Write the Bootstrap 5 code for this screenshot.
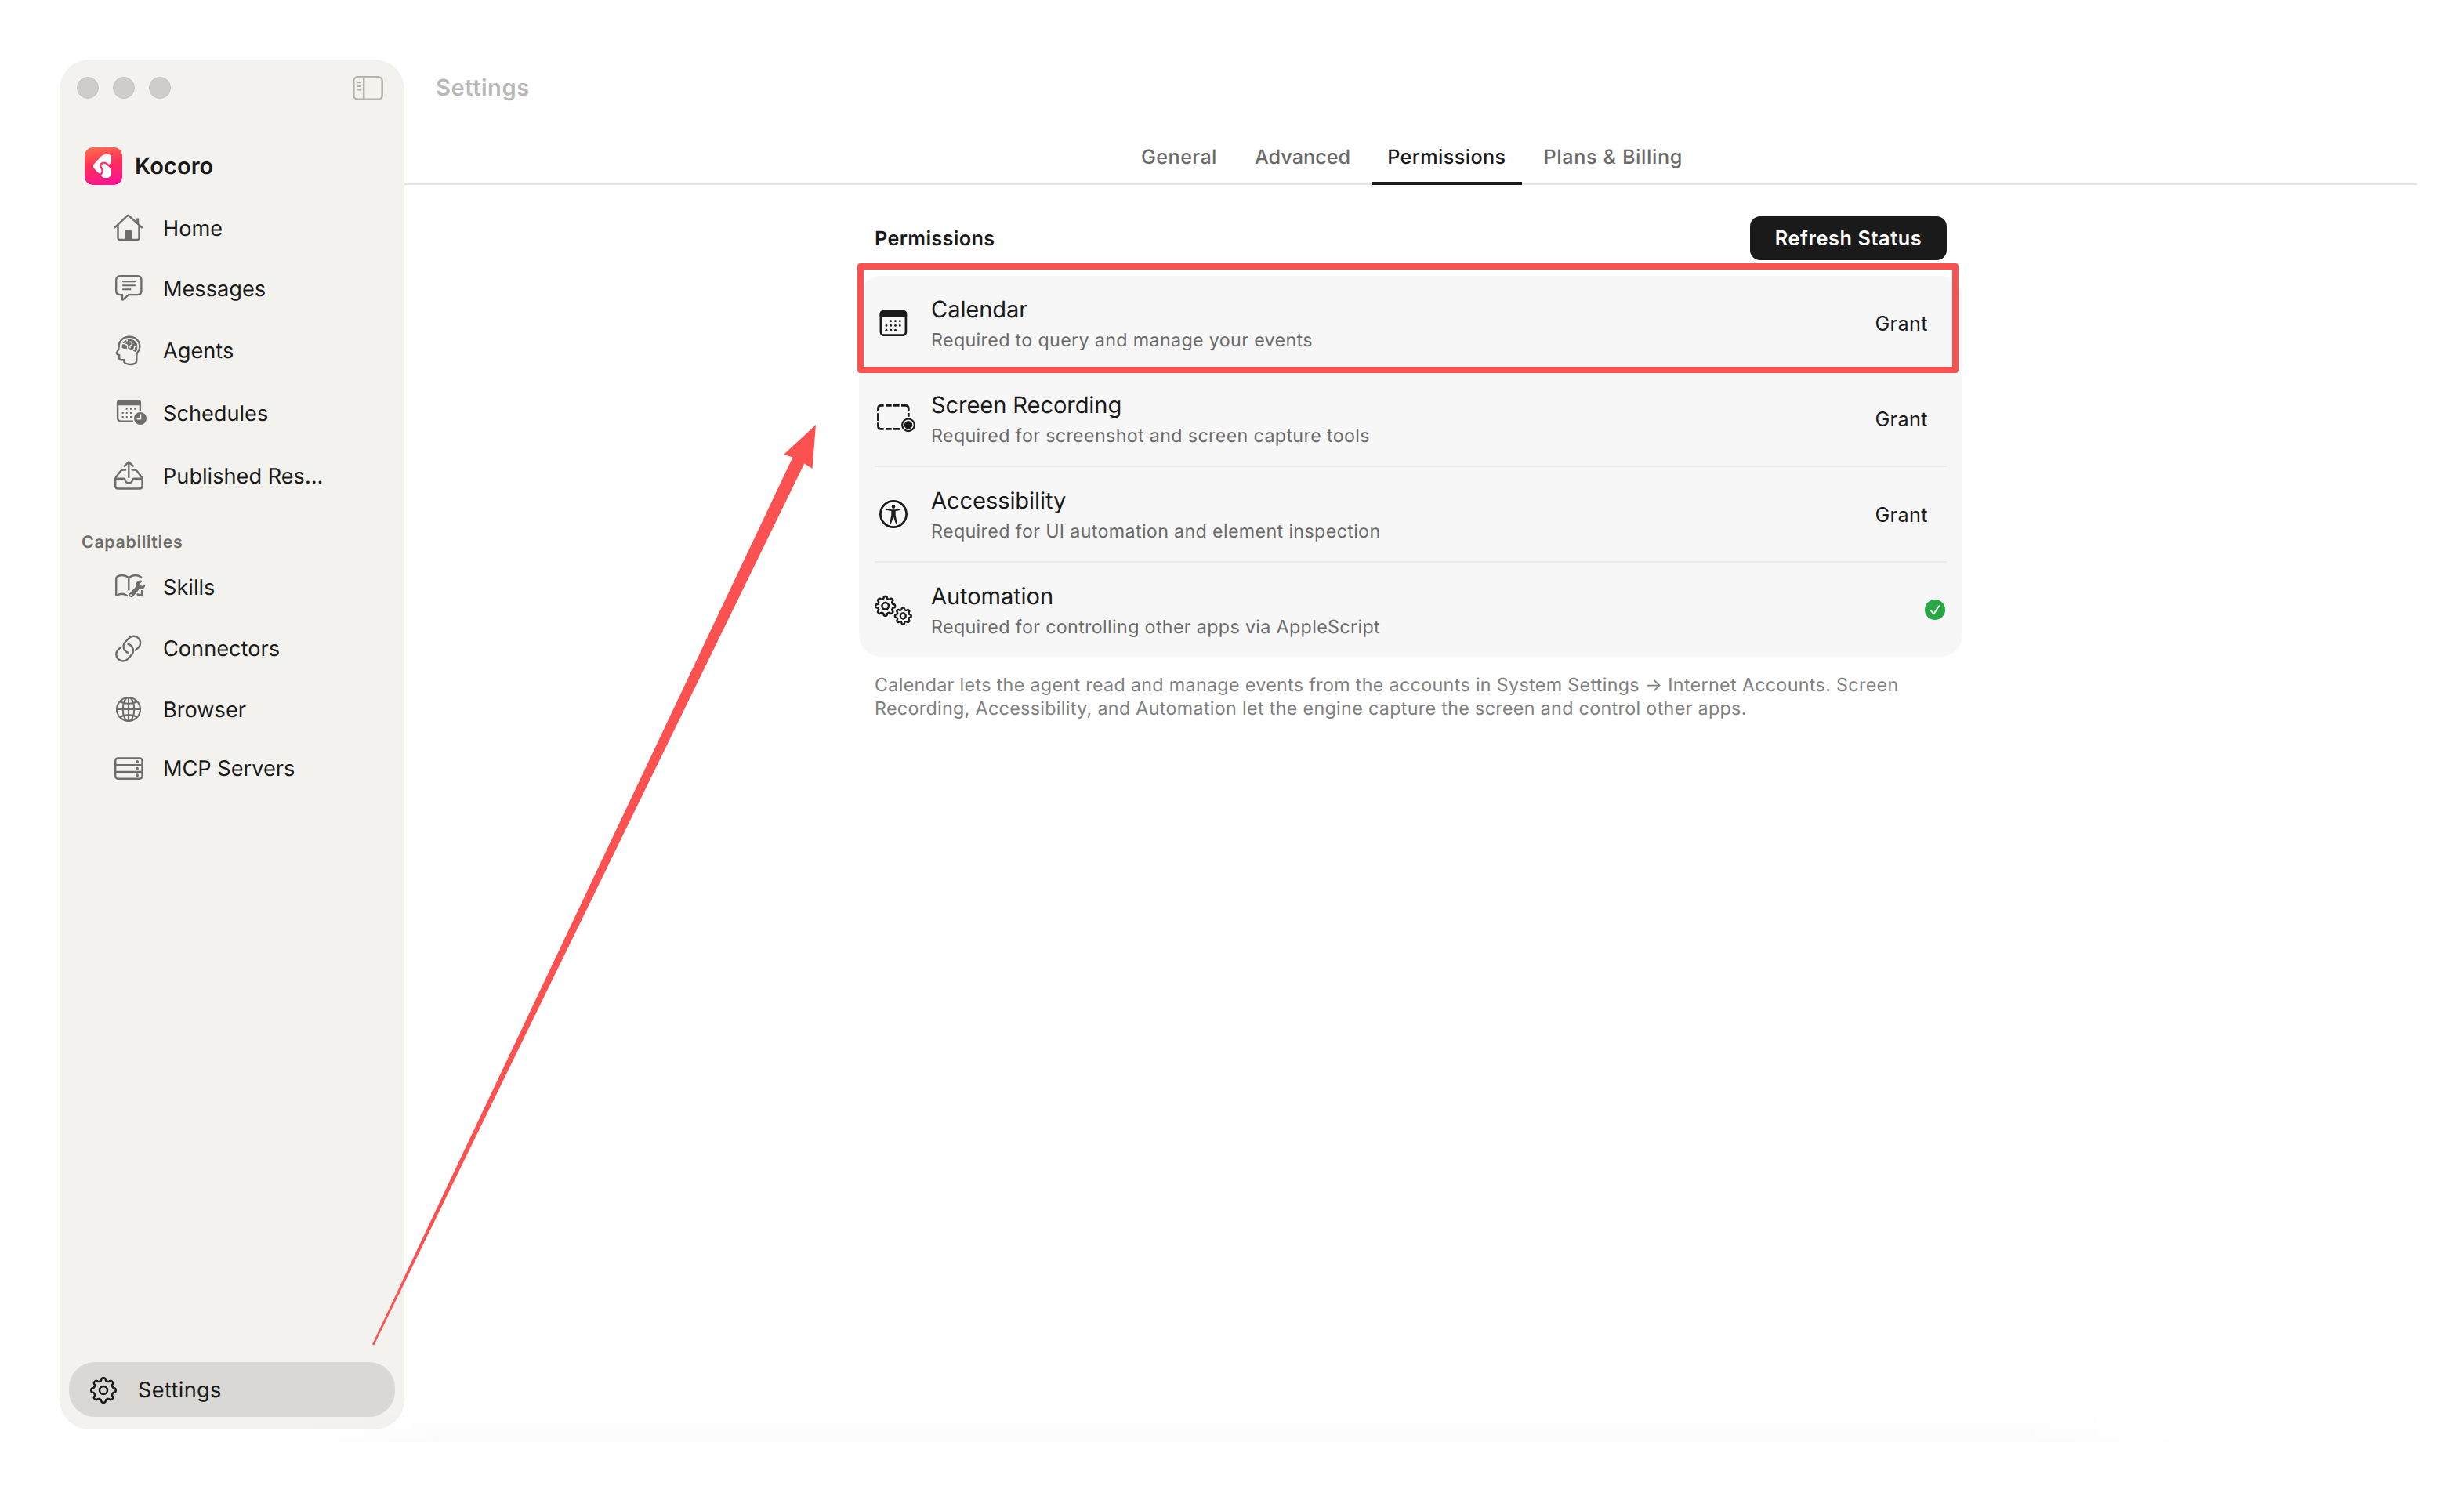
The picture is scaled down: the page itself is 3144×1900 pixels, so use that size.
<!DOCTYPE html>
<html lang="en">
<head>
<meta charset="utf-8">
<meta name="viewport" content="width=device-width, initial-scale=1">
<title>Kocoro – Settings</title>
<link href="https://cdn.jsdelivr.net/npm/bootstrap@5.3.0/dist/css/bootstrap.min.css" rel="stylesheet">
<style>
  :root { --ink: #1a1a1a; --muted: #6b6b6b; --side: #f3f2ee; --hot: #fb5151; }
  body { font-family: Inter, "Liberation Sans", sans-serif; color: var(--ink); background: #fff; height: 1900px; overflow: hidden; text-rendering: geometricPrecision; }
  svg { display: block; flex: none; fill: none; stroke: currentColor; stroke-linecap: round; stroke-linejoin: round; overflow: visible; }
  .solid { fill: currentColor; stroke: none; }
  .no-line { stroke: none; }
  .app-window { height: 1900px; padding: 76px 60px 76px 76px; }

  /* sidebar */
  .side-panel { width: 440px; height: 1748px; border-radius: 38px; background: var(--side); flex: none; }
  .title-strip { height: 72px; padding: 0 27px 0 22px; color: #b5b3ad; }
  .dot { width: 28px; height: 28px; border-radius: 50%; background: #cfcdc9; border: 1px solid #c5c3bf; }
  .dots { gap: 18px; }
  .brand { padding: 40px 0 0 32px; gap: 15px; height: 88px; font-size: 29.1px; font-weight: 600; line-height: 48px; }
  .brand span { padding: 1px 0 0 1px; }
  .side-link { padding-left: 64px; gap: 20px; height: 78px; font-size: 27.16px; line-height: 34px; color: var(--ink); text-decoration: none; }
  .side-link svg { width: 48px; height: 48px; stroke-width: 2.4; color: #6e6d6b; }
  .first { margin-top: 18px; height: 76px; }
  .tall { height: 80px; }
  .last { height: 72px; }
  .group-label { height: 63px; padding: 25px 0 0 28px; font-size: 21.34px; line-height: 38px; font-weight: 600; letter-spacing: .68px; color: #6e6d6b; }
  .side-settings { margin: 0 12px 16px; height: 70px; padding: 1px 0 0 25px; gap: 25px; border-radius: 33px; background: #d9d8d4; font-size: 27.16px; line-height: 34px; letter-spacing: .35px; color: var(--ink); text-decoration: none; }

  /* main area */
  .page-title { height: 72px; padding: 1px 0 0 40px; font-size: 29.1px; font-weight: 600; letter-spacing: .55px; line-height: 72px; color: #b8b8b8; }
  .tab-bar { height: 88px; gap: 8px; padding-left: 3px; border-bottom: 2px solid #e4e4e4; flex-wrap: nowrap; }
  .tab-bar .nav-link { height: 88px; padding: 35px 20px 0; font-size: 25.22px; line-height: 36px; font-weight: 500; color: var(--muted); border-bottom: 4px solid transparent; }
  .tab-bar .nav-link.active { padding-left: 19px; color: var(--ink); border-color: var(--ink); letter-spacing: .39px; }
  .t-gen { letter-spacing: .4px; } .t-plan { letter-spacing: .6px; }
  .content { width: 1408px; margin: 40px auto 0; }
  .head-row { height: 56px; margin: 0 20px 20px; }
  .head-title { font-size: 25.22px; line-height: 58px; font-weight: 600; letter-spacing: .36px; }
  .btn-refresh { width: 251px; height: 56px; padding: 1px 0 0; border: 0; border-radius: 13px; background: var(--ink); color: #fff; font-size: 25.22px; font-weight: 600; letter-spacing: .6px; line-height: 55px; }
  .perm-card { position: relative; border-radius: 28px; background: #f7f7f7; padding: 0 20px; height: 486px; }
  .perm-row { height: 122px; gap: 18px; border-bottom: 2px solid #ebebeb; }
  .perm-row.end-row { border-bottom-color: transparent; }
  .perm-row svg.ico { width: 54px; height: 54px; stroke-width: 2.7; }
  .perm-text { align-self: flex-start; padding-top: 25px; }
  .perm-name { font-size: 29.1px; line-height: 38px; letter-spacing: -.1px; }
  .perm-note { font-size: 23.28px; line-height: 38px; letter-spacing: .34px; color: var(--muted); white-space: nowrap; }
  .btn-grant { padding: 2px 24px 0 0; border: 0; font-size: 25.22px; line-height: 36px; letter-spacing: .4px; color: var(--ink); }
  .foot-note { margin: 21px 0 0 20px; font-size: 23.28px; line-height: 29.6px; letter-spacing: .33px; color: #808080; white-space: nowrap; }

  /* annotations laid over the interface */
  .callout { position: absolute; left: -2px; top: -16px; width: 1405px; height: 140px; border: 8px solid var(--hot); border-radius: 4px; }
  .pointer { position: absolute; left: 0; top: 0; width: 3144px; height: 1900px; color: var(--hot); pointer-events: none; }
  .shade { position: absolute; left: 340px; top: 1800px; width: 2460px; height: 40px; background: linear-gradient(rgba(0,0,0,0), rgba(0,0,0,.016)); -webkit-mask-image: linear-gradient(90deg, transparent, #000 10%, #000 90%, transparent); mask-image: linear-gradient(90deg, transparent, #000 10%, #000 90%, transparent); pointer-events: none; }
</style>
</head>
<body>
<div class="app-window d-flex">
  <aside class="side-panel d-flex flex-column">
    <div class="title-strip d-flex align-items-center justify-content-between">
      <div class="dots d-flex"><span class="dot"></span><span class="dot"></span><span class="dot"></span></div>
      <svg width="39" height="31" viewBox="0 0 39 31" stroke-width="2.5"><rect x="1.3" y="1.3" width="36.4" height="28.4" rx="5"/><path d="M14.2 1.5v28"/><path stroke-width="2" d="M5.8 8.2h4M5.8 12.9h4M5.8 17.5h4"/></svg>
    </div>
    <div class="brand d-flex align-items-center">
      <svg class="no-line" width="48" height="48" viewBox="0 0 48 48">
        <defs><linearGradient id="lg" x1=".35" y1="0" x2=".55" y2="1"><stop offset="0" stop-color="#ff6a4b"/><stop offset=".45" stop-color="#ff2f5c"/><stop offset="1" stop-color="#ff1493"/></linearGradient></defs>
        <rect width="48" height="48" rx="10.5" fill="url(#lg)"/>
        <path fill="#fff" d="M11.8 21.4 21 11.6Q23.6 9 27 9h3Q34 9.200 34 13.500V17.500Q34 20.300 31.300 22Q28.300 18.800 25 18.600Q20.300 18.700 19.300 22.300Q18.800 25 20.600 27.300Q22.600 30 20.200 33.600Q18 33.600 16.300 31.600L12 26.800Q9.800 24 11.800 21.400Z"/>
        <path fill="#fff" d="M21.600 23.200Q22 20.800 24.600 20.700Q26.300 20.800 27.600 22L32.400 26.300Q34 28 34 30.600V33.500Q33.600 37.600 29.500 39H26Q22.300 39 21.200 35.400Q24 33.500 24 30.500Q24.100 28 22.600 26Q21.500 24.700 21.600 23.200Z"/>
      </svg>
      <span>Kocoro</span>
    </div>
    <a class="side-link first d-flex align-items-center"><svg viewBox="0 0 48 48"><path d="M6.500 22.300 22 7.700q1.400-1.200 2.800 0L41 22.300"/><path d="M10.500 19.500V35.500q0 2.500 2.500 2.500H35q2.500 0 2.500-2.500V19.500"/><path stroke-width="3" stroke-linecap="butt" d="M35.700 10.500v7"/><path class="solid" d="M19.300 38V27.500q0-1.400 1.400-1.400h6q1.400 0 1.400 1.400V38Z"/></svg>Home</a>
    <a class="side-link d-flex align-items-center"><svg viewBox="0 0 48 48"><path d="M13.200 7.300h22.200q5 0 5 5v13.800q0 5-5 5H24.200L17 37.300q-1 .8-1-.6V31.100H13.200q-5 0-5-5V12.300q0-5 5-5Z"/><path stroke-width="2" d="M17 14.300h15M17 19.300h15M17 24.300h9.500"/></svg>Messages</a>
    <a class="side-link tall d-flex align-items-center"><svg viewBox="0 0 48 48"><path d="M18.300 35.300H14.500Q12.200 35.300 12.200 33V29.200L9.800 28.200Q8.300 27.300 9.200 25.600Q11.800 21.800 11.800 18C11.800 10.500 17.500 5.800 25 5.800S38.300 10.800 38.300 18.300Q38.300 21.800 36.500 24Q34.300 26.500 34.300 29.500V36.500Q34.300 38.700 32 39.800Q26.300 42 20.500 39.900Q18.300 39 18.300 37.300Z"/><path class="solid" d="M15.700 19.500Q14.800 14 19 11Q24 7.500 29.500 9.500Q34.500 11.700 35.300 17Q35.300 22.500 33.200 25.200Q30 24 28.500 22.200Q26.500 23.500 24.500 20.200Q22 22 20 20.800Q17 21.500 15.700 19.500Z"/><path stroke="#f3f2ee" stroke-width="1.500" d="M16 14.800q3 .2 4-1.500M22 8.800v2.500M22.500 20.500q.8-4.500-2-5M24.500 12.500q3.500-.8 4 1.500t-2.500 3.200v2.600M34.800 17.500q-3.500-.2-3.500 3.500l-2 2"/></svg>Agents</a>
    <a class="side-link tall d-flex align-items-center"><svg viewBox="0 0 48 48"><rect x="10.100" y="7.200" width="28.800" height="26.400" rx="4"/><path class="solid" d="M9 13.200V10q0-4 4-4H36q4 0 4 4v3.200Z"/><g class="solid"><path d="M20.700 16.700h2v2h-2zM26 16.700h2v2h-2zM31.300 16.700h2v2h-2zM15.700 22h2v2h-2zM20.700 22h2v2h-2zM26 22h2v2h-2zM15.700 27h2v2h-2zM20.700 27h2v2h-2zM26 27h2v2h-2z"/></g><circle class="no-line" cx="39" cy="30" r="9.800" fill="#f3f2ee"/><circle class="solid" cx="39" cy="30" r="8"/><path stroke="#f3f2ee" stroke-width="2" d="M39.300 25.300V30.400H35.500"/></svg>Schedules</a>
    <a class="side-link tall d-flex align-items-center"><svg viewBox="0 0 48 48"><path d="M20 15.500H17.200Q15.300 15.500 14 17L7.800 25Q7.200 26 7.200 27.500V36.300Q7.200 39.500 10.400 39.500H38.300Q41.500 39.500 41.500 36.300V27.500Q41.500 26 40.900 25L34.700 17Q33.400 15.500 31.500 15.500H28.700"/><path d="M7.500 26.800H17.500Q19.300 26.800 19.500 28.500Q20.500 32.300 24.300 32.300T29.200 28.500Q29.400 26.800 31.200 26.800H41.300"/><path d="M24.300 5.500V25M18.800 10.700 24.300 5.300 29.800 10.700"/></svg>Published Res...</a>
    <div class="group-label">Capabilities</div>
    <a class="side-link d-flex align-items-center"><svg viewBox="0 0 48 48"><path d="M22 34Q15.500 29.800 9.300 33.700Q8.200 34 8.200 32.800V12Q8.200 10.600 9.300 9.900Q16.500 5.600 24.300 11Q32 5.600 39.300 9.900L40.500 11.200M24.300 11V26.500M41 28.200V34L35.500 32.500"/><path class="solid" d="M25 31.500 33.600 22.600Q32.500 18.500 35.500 16Q38.400 13.600 42 15.200L38.800 18.400 39.500 21.300 42.500 21.800 45.300 19.700Q45.500 23.500 42.500 25.300Q40.500 26.500 37.800 25.800L29.800 35.200Q27.500 37 25.200 35.300Q23.400 33.600 25 31.500Z"/><circle class="no-line" cx="27.300" cy="33.300" r="1.100" fill="#f3f2ee"/></svg>Skills</a>
    <a class="side-link d-flex align-items-center"><svg viewBox="0 0 48 48"><path d="M33 25.600 37 21.900A8.500 8.500 0 0 0 25 9.900L19.500 15.500A8.500 8.500 0 0 0 23.800 29"/><path d="M14.400 21.600 10.400 25.300A8.500 8.500 0 0 0 22.400 37.300L27.900 31.700A8.500 8.500 0 0 0 23.600 18"/></svg>Connectors</a>
    <a class="side-link d-flex align-items-center"><svg viewBox="0 0 48 48"><g stroke-width="2.100"><circle cx="24" cy="23" r="15"/><ellipse cx="24" cy="23" rx="7.300" ry="15"/><path d="M24 8v30M9 23h30M13 13.200Q24 18.800 35 13.200M13 32.800Q24 27.200 35 32.800"/></g></svg>Browser</a>
    <a class="side-link last d-flex align-items-center"><svg viewBox="0 0 48 48"><rect x="7.200" y="10.500" width="34.300" height="26.200" rx="3.200"/><path d="M7.200 19.300H41.500M7.200 28H41.500"/><g class="solid"><circle cx="35" cy="15" r="2"/><circle cx="35" cy="23.700" r="2"/><circle cx="35" cy="32.300" r="2"/></g></svg>MCP Servers</a>
    <a class="side-settings d-flex align-items-center mt-auto"><svg width="38" height="38" viewBox="-19 -19 38 38" stroke-width="2.500"><path data-gear="14 1.700"/><circle r="5"/></svg>Settings</a>
  </aside>

  <main class="flex-grow-1">
    <div class="page-title">Settings</div>
    <nav class="tab-bar nav justify-content-center">
      <a class="nav-link t-gen">General</a>
      <a class="nav-link">Advanced</a>
      <a class="nav-link active">Permissions</a>
      <a class="nav-link t-plan">Plans &amp; Billing</a>
    </nav>
    <section class="content">
      <div class="head-row d-flex justify-content-between">
        <div class="head-title">Permissions</div>
        <button class="btn btn-refresh">Refresh Status</button>
      </div>
      <div class="perm-card">
        <div class="perm-row d-flex align-items-center">
          <svg class="ico" viewBox="0 0 54 54"><rect x="7.900" y="12.300" width="32" height="30.400" rx="4"/><path class="solid" d="M6.600 19V15.500Q6.600 11 11 11H37Q41.200 11 41.200 15.500V19Z"/><g class="solid"><circle cx="20.700" cy="24.700" r="1.400"/><circle cx="26.500" cy="24.700" r="1.400"/><circle cx="32.300" cy="24.700" r="1.400"/><circle cx="15" cy="30.400" r="1.400"/><circle cx="20.700" cy="30.400" r="1.400"/><circle cx="26.500" cy="30.400" r="1.400"/><circle cx="32.300" cy="30.400" r="1.400"/><circle cx="15" cy="36.200" r="1.400"/><circle cx="20.700" cy="36.200" r="1.400"/><circle cx="26.500" cy="36.200" r="1.400"/></g></svg>
          <div class="perm-text flex-grow-1"><div class="perm-name">Calendar</div><div class="perm-note">Required to query and manage your events</div></div>
          <button class="btn btn-grant">Grant</button>
        </div>
        <div class="perm-row d-flex align-items-center">
          <svg class="ico" viewBox="0 0 54 54"><path stroke-linecap="butt" d="M4.400 18V14.500Q4.400 10.400 8.500 10.400H11.700M14 10.400h7.700M24 10.400h7.700M34 10.400h5.200Q43.300 10.400 43.300 14.500V17.300M43.300 20v4.700M4.400 20.300V30M4.400 32.300V36.200Q4.400 40.400 8.500 40.400H11.700M14 40.400h7.700M24 40.400h8.500"/><circle cx="43" cy="35.300" r="7.800" stroke-width="2.200"/><circle class="solid" cx="43" cy="35.300" r="5.200"/></svg>
          <div class="perm-text flex-grow-1"><div class="perm-name">Screen Recording</div><div class="perm-note">Required for screenshot and screen capture tools</div></div>
          <button class="btn btn-grant">Grant</button>
        </div>
        <div class="perm-row d-flex align-items-center">
          <svg class="ico" viewBox="0 0 54 54"><circle cx="24" cy="27" r="16.600"/><circle class="solid" cx="24" cy="17.600" r="2.300"/><path class="solid" d="M15.600 20.200 22 21.200H26L32.400 20.200Q33.500 20.300 33.300 21.200T32.500 22L26.700 23.100V28.500L28.700 38Q28.500 39 27.600 38.900T26.600 38L24.200 31H23.800L21.400 38Q21.200 39 20.300 38.900T19.300 38L21.300 28.500V23.100L15.500 22Q14.700 21.900 14.700 21.100T15.600 20.200Z"/></svg>
          <div class="perm-text flex-grow-1"><div class="perm-name">Accessibility</div><div class="perm-note">Required for UI automation and element inspection</div></div>
          <button class="btn btn-grant">Grant</button>
        </div>
        <div class="perm-row end-row d-flex align-items-center">
          <svg class="ico" viewBox="0 0 54 54"><g transform="translate(13.700 22.300)" stroke-width="2.500"><path data-gear="11 1.400"/><circle r="4.300"/></g><g transform="translate(36.300 35)" stroke-width="2.300"><path data-gear="9.200 1.200"/><circle r="3.500"/></g></svg>
          <div class="perm-text flex-grow-1"><div class="perm-name">Automation</div><div class="perm-note">Required for controlling other apps via AppleScript</div></div>
          <svg width="28" height="26" viewBox="0 0 28 26"><circle class="no-line" cx="13" cy="13" r="13" fill="#28a745"/><path stroke="#fff" stroke-width="2" d="M7.800 14.200 11.600 18.300 18.200 8.200"/></svg>
        </div>
        <div class="callout"></div>
      </div>
      <p class="foot-note">Calendar lets the agent read and manage events from the accounts in System Settings → Internet Accounts. Screen<br>Recording, Accessibility, and Automation let the engine capture the screen and control other apps.</p>
    </section>
  </main>
</div>
<div class="shade"></div>
<svg class="pointer" viewBox="0 0 3144 1900"><path class="solid" d="M475 1715.500 1011.500 583.500 1000 580 1041 542 1036.500 598 1026.300 591.500 477.200 1716.500Z"/></svg>
<script src="https://cdn.jsdelivr.net/npm/bootstrap@5.3.0/dist/js/bootstrap.bundle.min.js"></script>
<script>
  // Eight-toothed gear outlines: mean radius and tooth height come from data-gear
  document.querySelectorAll('[data-gear]').forEach(p => {
    const [r, a] = p.dataset.gear.split(' ').map(Number);
    let d = '';
    for (let i = 0; i < 240; i++) {
      const t = i / 240 * 2 * Math.PI, q = r + a * Math.tanh(2.2 * Math.cos(8 * t)) / Math.tanh(2.2);
      d += (i ? 'L' : 'M') + (q * Math.cos(t)).toFixed(2) + ' ' + (q * Math.sin(t)).toFixed(2);
    }
    p.setAttribute('d', d + 'Z');
  });
</script>
</body>
</html>
